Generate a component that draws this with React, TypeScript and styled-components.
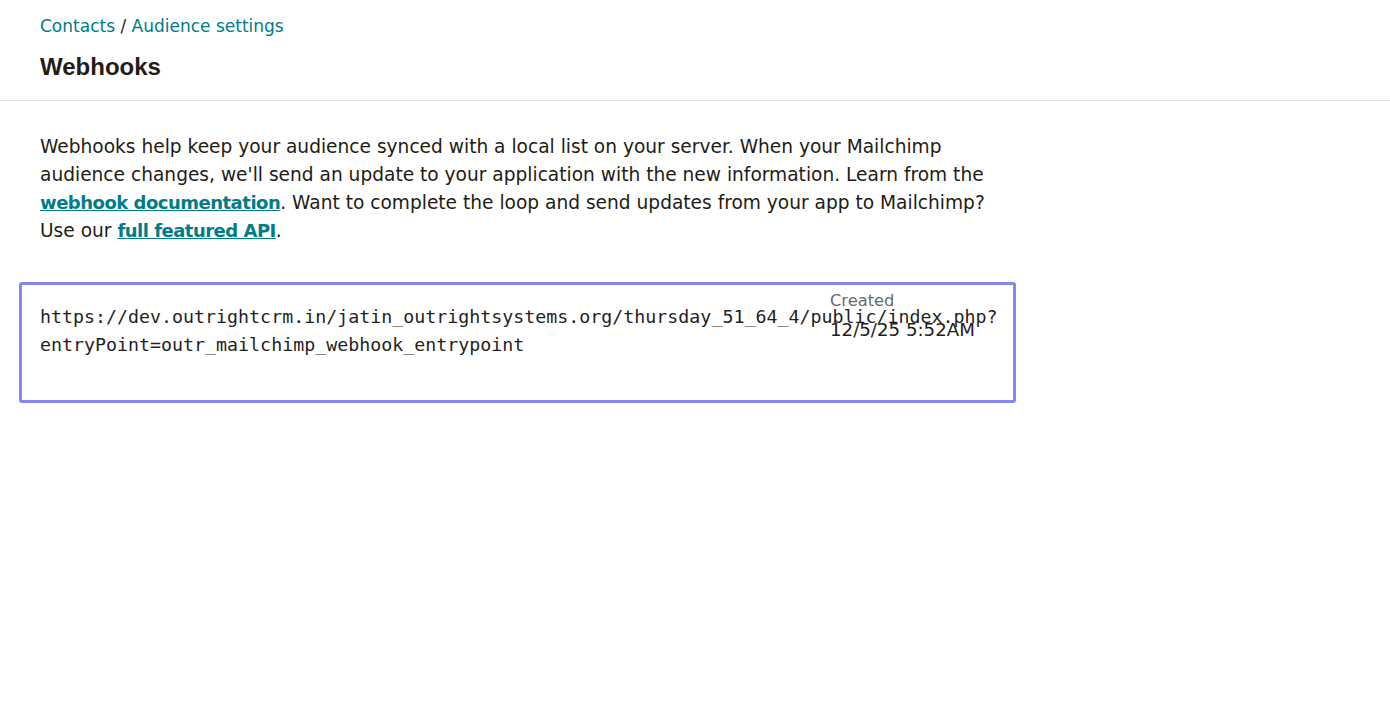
import React from "react";
import styled, { createGlobalStyle } from "styled-components";

const Global = createGlobalStyle`
  html, body { margin: 0; padding: 0; background: #ffffff; }
  body { font-family: "DejaVu Sans", "Liberation Sans", sans-serif; color: #241c15; }
`;

const Page = styled.div`
  display: flex;
  flex-direction: column;
`;

const Header = styled.header`
  display: flex;
  flex-direction: column;
  padding: 15px 40px 18px;
  border-bottom: 1px solid #e3e3e3;
`;

const Breadcrumb = styled.nav`
  font-size: 17px;
  line-height: 22px;
  color: #241c15;
`;

const Crumb = styled.a`
  color: #007c89;
  text-decoration: none;
`;

const Title = styled.h1`
  margin: 15px 0 0;
  font-family: "Liberation Sans", Arial, sans-serif;
  font-size: 24px;
  line-height: 30px;
  font-weight: 700;
  color: #241c15;
`;

const Content = styled.main`
  display: flex;
  flex-direction: column;
  padding: 32px 19px 0;
`;

const Intro = styled.p`
  margin: 0 0 0 21px;
  max-width: 960px;
  font-size: 18.6px;
  line-height: 28px;
  color: #241c15;
`;

const Link = styled.a`
  color: #007c89;
  font-size: 18px;
  font-weight: 700;
  letter-spacing: -0.5px;
  text-decoration: underline;
`;

const UrlBox = styled.div`
  position: relative;
  margin-top: 37px;
  width: 997px;
  box-sizing: border-box;
  padding: 18px 8px 41px 18px;
  border: 3px solid #8587f1;
  border-radius: 3px;
`;

const Url = styled.div`
  font-family: "DejaVu Sans Mono", "Liberation Mono", monospace;
  font-size: 18.3px;
  line-height: 28px;
  color: #1f1f1f;
`;

const Meta = styled.div`
  position: absolute;
  left: 808px;
  top: 6px;
  display: flex;
  flex-direction: column;
`;

const MetaLabel = styled.span`
  font-size: 16.3px;
  line-height: 20px;
  color: #6b6b6b;
`;

const MetaValue = styled.span`
  margin-top: 7px;
  font-size: 18.2px;
  line-height: 24px;
  color: #241c15;
`;

export default function App() {
  return (
    <Page>
      <Global />
      <Header>
        <Breadcrumb>
          <Crumb href="#">Contacts</Crumb> / <Crumb href="#">Audience settings</Crumb>
        </Breadcrumb>
        <Title>Webhooks</Title>
      </Header>
      <Content>
        <Intro>
          Webhooks help keep your audience synced with a local list on your server. When your Mailchimp
          audience changes, we'll send an update to your application with the new information. Learn from the{" "}
          <Link href="#">webhook documentation</Link>. Want to complete the loop and send updates from your app to
          Mailchimp? Use our <Link href="#">full featured API</Link>.
        </Intro>
        <UrlBox>
          <Url>
            https://dev.outrightcrm.in/jatin_outrightsystems.org/thursday_51_64_4/public/index.php?entryPoint=outr_mailchimp_webhook_entrypoint
          </Url>
          <Meta>
            <MetaLabel>Created</MetaLabel>
            <MetaValue>12/5/25 5:52AM</MetaValue>
          </Meta>
        </UrlBox>
      </Content>
    </Page>
  );
}
